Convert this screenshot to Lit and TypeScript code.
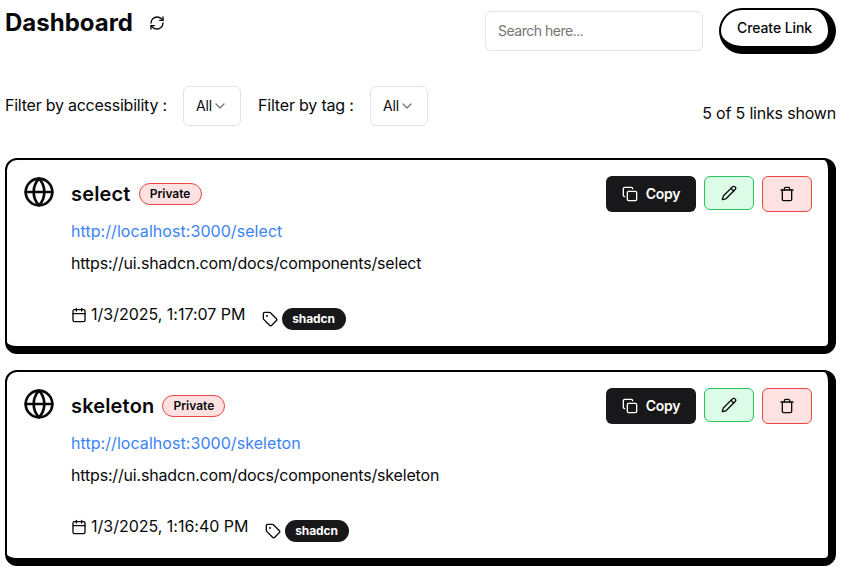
import { LitElement, html, css, svg } from "lit";
import { customElement, property } from "lit/decorators.js";

const paths = {
  refresh: svg`<path d="M3 12a9 9 0 0 1 9-9 9.75 9.75 0 0 1 6.74 2.74L21 8"/><path d="M21 3v5h-5"/><path d="M21 12a9 9 0 0 1-9 9 9.75 9.75 0 0 1-6.74-2.74L3 16"/><path d="M8 16H3v5"/>`,
  chevron: svg`<path d="m6 9 6 6 6-6"/>`,
  globe: svg`<circle cx="12" cy="12" r="10"/><path d="M12 2a14.5 14.5 0 0 0 0 20 14.5 14.5 0 0 0 0-20"/><path d="M2 12h20"/>`,
  copy: svg`<rect width="14" height="14" x="8" y="8" rx="2"/><path d="M4 16c-1.1 0-2-.9-2-2V4c0-1.1.9-2 2-2h10c1.1 0 2 .9 2 2"/>`,
  pencil: svg`<path d="M21.174 6.812a1 1 0 0 0-3.986-3.987L3.842 16.174a2 2 0 0 0-.5.83l-1.321 4.352a.5.5 0 0 0 .623.622l4.353-1.32a2 2 0 0 0 .83-.497z"/><path d="m15 5 4 4"/>`,
  trash: svg`<path d="M3 6h18"/><path d="M19 6v14c0 1-1 2-2 2H7c-1 0-2-1-2-2V6"/><path d="M8 6V4c0-1 1-2 2-2h4c1 0 2 1 2 2v2"/>`,
  calendar: svg`<path d="M8 2v4M16 2v4"/><rect width="18" height="18" x="3" y="4" rx="2"/><path d="M3 10h18"/>`,
  tag: svg`<path d="M12.586 2.586A2 2 0 0 0 11.172 2H4a2 2 0 0 0-2 2v7.172a2 2 0 0 0 .586 1.414l8.704 8.704a2.426 2.426 0 0 0 3.42 0l6.58-6.58a2.426 2.426 0 0 0 0-3.42z"/><circle cx="7.5" cy="7.5" r=".5" fill="currentColor"/>`,
};

const icon = (name: keyof typeof paths, size: number) => html`<svg width=${size} height=${size}
  viewBox="0 0 24 24" fill="none" stroke="currentColor" stroke-width="2"
  stroke-linecap="round" stroke-linejoin="round">${paths[name]}</svg>`;

@customElement("link-card")
class LinkCard extends LitElement {
  @property() name = "";
  @property() target = "";
  @property() date = "";

  static styles = css`
    :host { display: block; }
    * { box-sizing: border-box; }
    svg { display: block; flex: none; }
    .card { display: flex; height: 196px; border: 2px solid #000; border-width: 2px 8px 8px 2px; border-radius: 12px; padding: 16px 16px 0 16px; background: #fff; }
    .body { margin-left: 16px; flex: 1; line-height: 24px; }
    .title { display: flex; align-items: center; gap: 8px; height: 36px; font-size: 20px; font-weight: 600; }
    .name { letter-spacing: 0.16px; }
    .badge { width: 63px; text-align: center; font-size: 12px; font-weight: 600; line-height: 20px; height: 22px; border: 1px solid #ef4444; background: #fee2e2; border-radius: 11px; }
    .link { color: #3b82f6; margin-top: 7px; letter-spacing: 0.06px; }
    .target { margin-top: 8px; letter-spacing: -0.175px; }
    .meta { display: flex; margin-top: 27px; }
    .date { display: flex; align-items: center; gap: 4px; height: 24px; }
    .date svg { margin-top: 1px; }
    .when { letter-spacing: -0.01px; }
    .tags { display: flex; align-items: center; gap: 4px; margin: 5px 0 0 16px; height: 24px; }
    .tag { width: 64px; text-align: center; background: #18181b; color: #fff; border-radius: 11px; height: 22px; line-height: 22px; font-size: 12px; font-weight: 700; letter-spacing: -0.1px; }
    .actions { display: flex; align-items: flex-start; gap: 8px; }
    .btn { display: flex; align-items: center; justify-content: center; width: 50px; height: 36px; border-radius: 6px; border: 1px solid; }
    .copy { width: 90px; background: #18181b; color: #fff; border: 0; gap: 8px; font-size: 14px; font-weight: 600; letter-spacing: -0.25px; }
    .edit { height: 34px; background: #dcfce7; border-color: #22c55e; }
    .delete { background: #fee2e2; border-color: #ef4444; }
    .btn svg { color: #09090b; }
    .copy svg { color: #fff; }
  `;

  render() {
    return html`<div class="card">
      ${icon("globe", 32)}
      <div class="body">
        <div class="title"><span class="name">${this.name}</span><span class="badge">Private</span></div>
        <div class="link">http://localhost:3000/${this.name}</div>
        <div class="target">${this.target}</div>
        <div class="meta">
          <div class="date">${icon("calendar", 16)}<span class="when">${this.date}</span></div>
          <div class="tags">${icon("tag", 16)}<span class="tag">shadcn</span></div>
        </div>
      </div>
      <div class="actions">
        <div class="btn copy">${icon("copy", 16)}<span>Copy</span></div>
        <div class="btn edit">${icon("pencil", 16)}</div>
        <div class="btn delete">${icon("trash", 16)}</div>
      </div>
    </div>`;
  }
}

@customElement("app-root")
class AppRoot extends LitElement {
  static styles = css`
    :host { display: block; height: 574px; overflow: hidden; padding: 0 9px 0 5px; box-sizing: border-box; background: #fff; color: #09090b; font: 16px/24px Inter, "Liberation Sans", sans-serif; }
    * { box-sizing: border-box; }
    svg { display: block; flex: none; }
    .top { display: flex; align-items: flex-start; padding-top: 8px; height: 86px; }
    .heading { font-size: 24px; line-height: 30px; font-weight: 700; margin-right: 16px; }
    .refresh { margin-top: 7px; }
    .search { margin: 3px 16px 0 auto; width: 218px; height: 40px; border: 1px solid #e4e4e7; border-radius: 6px; padding: 0 12px; font-size: 14px; line-height: 38px; color: #757575; letter-spacing: -0.49px; }
    .create { width: 117px; height: 46px; border: 2px solid #000; border-width: 2px 8px 8px 2px; border-radius: 23px; text-align: center; font-size: 14px; line-height: 36px; font-weight: 500; letter-spacing: -0.08px; }
    .filters { display: flex; align-items: center; height: 40px; }
    .label { white-space: nowrap; margin-bottom: 2px; }
    .access { width: 162px; letter-spacing: -0.24px; }
    .bytag { width: 96px; letter-spacing: -0.19px; }
    .select { display: flex; align-items: center; padding-left: 12px; width: 58px; height: 40px; border: 1px solid #e4e4e7; border-radius: 6px; margin: 0 17px 0 16px; font-size: 14px; letter-spacing: -0.2px; }
    .select svg { opacity: .55; }
    .count { margin: 14px 0 0 auto; letter-spacing: -0.19px; }
    .list { display: grid; gap: 16px; margin-top: 32px; }
  `;

  render() {
    return html`
      <div class="top">
        <div class="heading">Dashboard</div>
        <div class="refresh">${icon("refresh", 16)}</div>
        <div class="search">Search here...</div>
        <div class="create">Create Link</div>
      </div>
      <div class="filters">
        <span class="label access">Filter by accessibility :</span>
        <div class="select"><span>All</span>${icon("chevron", 16)}</div>
        <span class="label bytag">Filter by tag :</span>
        <div class="select"><span>All</span>${icon("chevron", 16)}</div>
        <span class="count">5 of 5 links shown</span>
      </div>
      <div class="list">
        <link-card name="select" target="https://ui.shadcn.com/docs/components/select" date="1/3/2025, 1:17:07 PM"></link-card>
        <link-card name="skeleton" target="https://ui.shadcn.com/docs/components/skeleton" date="1/3/2025, 1:16:40 PM"></link-card>
      </div>`;
  }
}
